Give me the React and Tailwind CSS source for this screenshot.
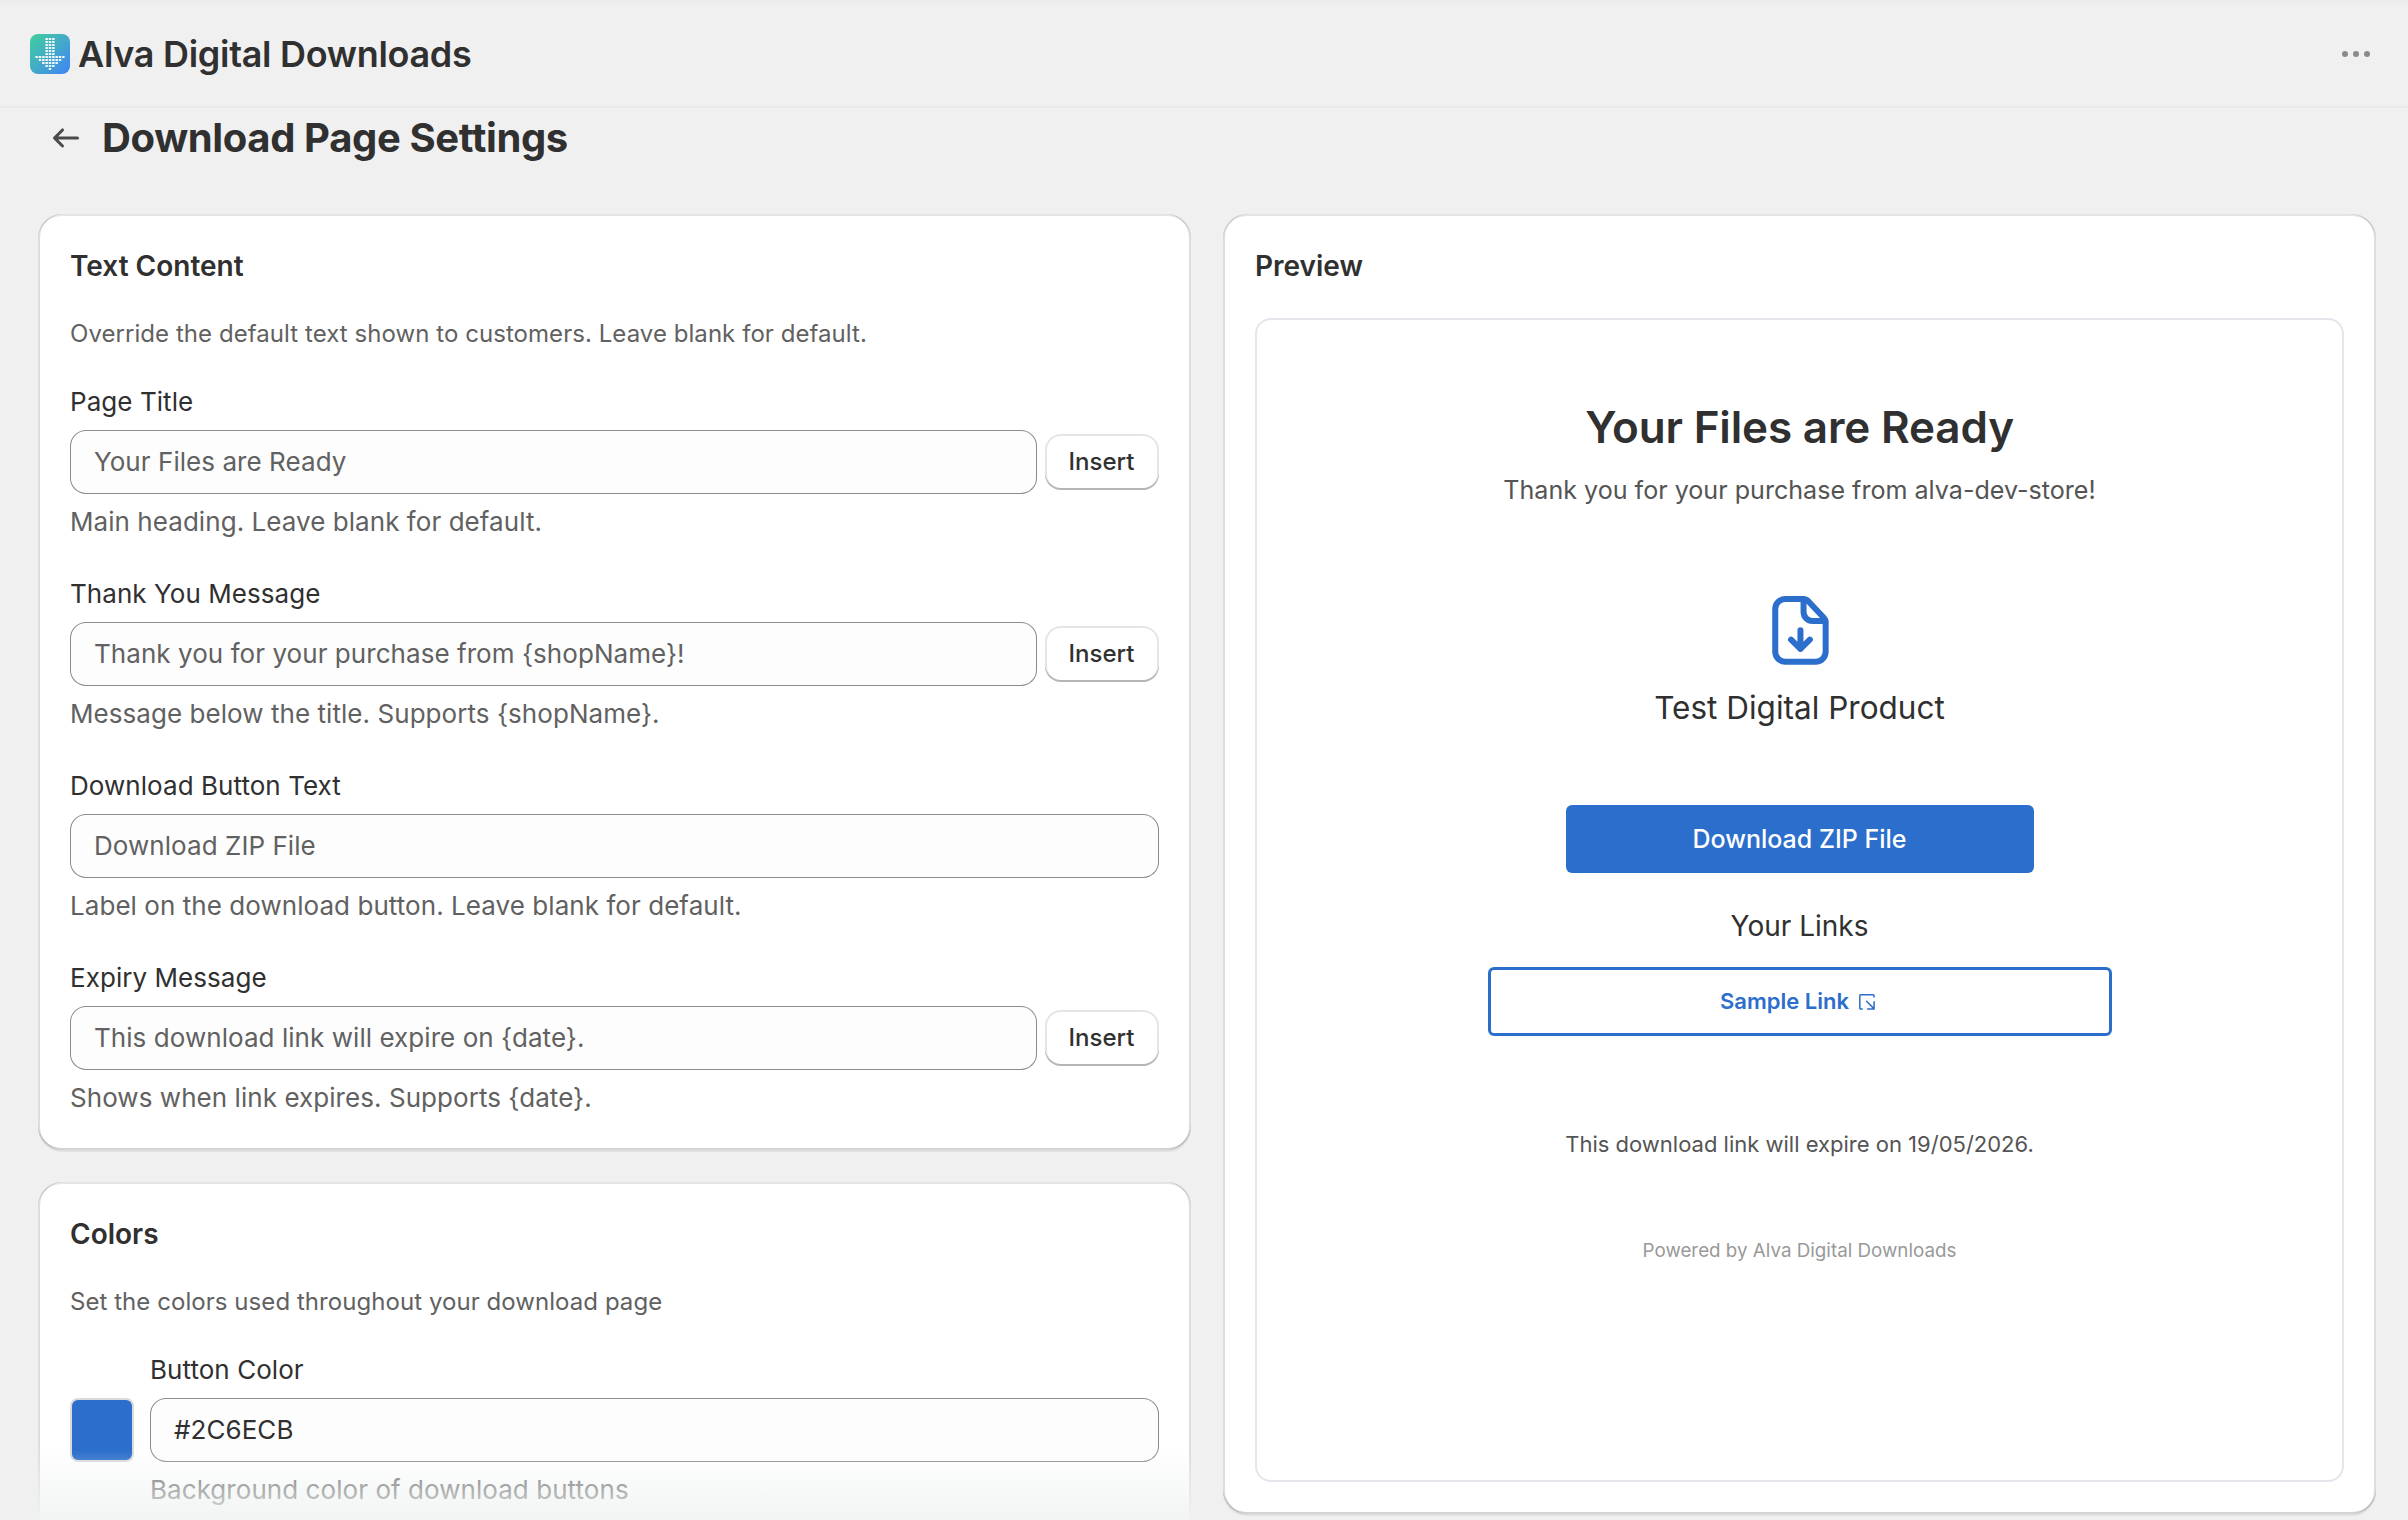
import { clsx } from "clsx";

const textFields = [
  {
    label: "Page Title",
    placeholder: "Your Files are Ready",
    help: "Main heading. Leave blank for default.",
    insertable: true,
  },
  {
    label: "Thank You Message",
    placeholder: "Thank you for your purchase from {shopName}!",
    help: "Message below the title. Supports {shopName}.",
    insertable: true,
  },
  {
    label: "Download Button Text",
    placeholder: "Download ZIP File",
    help: "Label on the download button. Leave blank for default.",
    insertable: false,
  },
  {
    label: "Expiry Message",
    placeholder: "This download link will expire on {date}.",
    help: "Shows when link expires. Supports {date}.",
    insertable: true,
  },
];

// dots per row of the logo's arrow, shaft first, then the head down to the tip
const LOGO_ROWS = [3, 3, 3, 3, 3, 3, 9, 7, 5, 3, 1];

function AppLogo() {
  return (
    <svg width="40" height="40" viewBox="0 0 40 40" className="shrink-0">
      <defs>
        <linearGradient id="logo-fill" x1="0" y1="0" x2="1" y2="1">
          <stop offset="0" stopColor="#3fcf9c" />
          <stop offset="0.5" stopColor="#43aac8" />
          <stop offset="1" stopColor="#3f83f8" />
        </linearGradient>
      </defs>
      <rect width="40" height="40" rx="8" fill="url(#logo-fill)" />
      {LOGO_ROWS.map((count, row) =>
        Array.from({ length: count }, (_, i) => (
          <rect
            key={`${row}-${i}`}
            x={20 + (i - (count - 1) / 2) * 3.33 - 1.25}
            y={5 + row * 3 - 1.1}
            width="2.5"
            height="2.2"
            rx="0.6"
            fill="#fff"
            fillOpacity="0.95"
          />
        ))
      )}
    </svg>
  );
}

function ArrowLeftIcon() {
  return (
    <svg width="40" height="40" viewBox="0 0 20 20" fill="#4a4a4a" className="shrink-0">
      <path d="M16.5 10a.75.75 0 0 1-.75.75h-9.69l2.72 2.72a.75.75 0 0 1-1.06 1.06l-4-4a.75.75 0 0 1 0-1.06l4-4a.75.75 0 1 1 1.06 1.06l-2.72 2.72h9.69a.75.75 0 0 1 .75.75Z" />
    </svg>
  );
}

function FileDownloadIcon({ className }) {
  return (
    <svg
      width="57"
      height="69"
      viewBox="0 0 56.5 69"
      fill="none"
      stroke="#2c6ecb"
      strokeWidth="6"
      strokeLinecap="round"
      strokeLinejoin="round"
      className={className}
    >
      <path d="M31.5 3H13A10 10 0 0 0 3 13v42.7a10 10 0 0 0 10 10h30.4a10 10 0 0 0 10-10V26c0-1.5-.5-2.9-1.6-4L35.6 4.7C34.5 3.6 33 3 31.5 3Z" />
      <path d="M31.3 3.5V16a9 9 0 0 0 9 9H53" />
      <path d="M28.2 34.3V53M18.8 43.6l9.4 9.2 9.4-9.2" />
    </svg>
  );
}

function ExternalIcon() {
  return (
    <svg width="16" height="16" viewBox="0 0 16 16" fill="none" stroke="#2c6ecb" strokeWidth="1.5" strokeLinecap="round" strokeLinejoin="round" className="mr-1">
      <path d="M15 3V1.5a.7.7 0 0 0-.7-.7H1.5a.7.7 0 0 0-.7.7v12.8a.7.7 0 0 0 .7.7H3.2" />
      <path d="M7.6 7.2l7.3 7.4M15.1 7.8v7.1H8.6" />
    </svg>
  );
}

function Card({ title, className, children }) {
  return (
    <section
      className={clsx(
        "rounded-3xl bg-white p-8 shadow-[0_2px_0_0_rgba(26,26,26,0.07),inset_2px_0_0_0_rgba(0,0,0,0.13),inset_-2px_0_0_0_rgba(0,0,0,0.13),inset_0_-2px_0_0_rgba(0,0,0,0.17),inset_0_2px_0_0_rgba(204,204,204,0.5)]",
        className
      )}
    >
      <h2 className="text-[28px] leading-10 font-semibold">{title}</h2>
      {children}
    </section>
  );
}

function TextField({ label, help, insertable, ...inputProps }) {
  return (
    <div className="min-w-0 flex-1 text-[26px] leading-10 tracking-[0.055px]">
      <label className="block">{label}</label>
      <div className="my-2 flex items-center gap-2">
        <input
          type="text"
          className="h-16 min-w-0 flex-1 rounded-2xl border border-[#8a8a8a] border-t-[#898f94] bg-[#fdfdfd] px-[23px] pb-0.5 text-[#303030] placeholder:text-[#616161] outline-none"
          {...inputProps}
        />
        {insertable ? (
          <button
            type="button"
            className="h-14 w-[114px] rounded-2xl bg-white pr-px text-2xl font-medium shadow-[inset_0_-2px_0_0_#b5b5b5,inset_0_0_0_2px_rgba(0,0,0,0.1)]"
          >
            Insert
          </button>
        ) : null}
      </div>
      <p className="text-[#616161]">{help}</p>
    </div>
  );
}

function DownloadPreview() {
  return (
    <div className="mt-8 flex h-[1164px] flex-col items-center rounded-2xl border-2 border-[#e5e5eb] pt-[79px] text-center">
      <h3 className="text-[44px] leading-14 font-semibold tracking-[-0.16px]">Your Files are Ready</h3>
      <p className="mt-[17px] text-[25.1px] leading-9 text-[#545454]">
        Thank you for your purchase from alva-dev-store!
      </p>
      <FileDownloadIcon className="mt-[88px] ml-px" />
      <p className="mt-[23px] text-[31.5px] leading-10">Test Digital Product</p>
      <button type="button" className="mt-[77px] h-[68px] w-[468px] rounded-md bg-[#2c6ecb] pt-0.5 text-[25px] font-medium text-white">
        Download ZIP File
      </button>
      <p className="mt-[33px] text-[28px] leading-10">Your Links</p>
      <a className="mt-[21px] flex h-[69px] w-[624px] items-center justify-center gap-2.5 rounded-md border-3 border-[#2c6ecb] text-[22px] font-semibold text-[#2c6ecb]">
        Sample Link
        <ExternalIcon />
      </a>
      <p className="mt-[92px] text-[22px] leading-8 text-[#545454]">This download link will expire on 19/05/2026.</p>
      <p className="mt-[77px] text-[18.8px] leading-7 text-[#999999]">Powered by Alva Digital Downloads</p>
    </div>
  );
}

export default function App() {
  return (
    <div className="h-[1520px] overflow-hidden bg-[#f0f0f0] font-['Inter',sans-serif] text-[#303030]">
      <header className="flex h-[108px] items-center justify-between border-b-2 border-[#eaeaea] bg-linear-to-b from-[#ebebeb] to-[#f0f0f0] to-[8px] pt-0.5 pr-[38px] pl-[30px]">
        <div className="flex items-center gap-2">
          <AppLogo />
          <span className="text-4xl font-semibold tracking-[-0.3px]">Alva Digital Downloads</span>
        </div>
        <div className="flex gap-[5px]">
          <span className="size-1.5 rounded-full bg-[#8a8a8a]" />
          <span className="size-1.5 rounded-full bg-[#8a8a8a]" />
          <span className="size-1.5 rounded-full bg-[#8a8a8a]" />
        </div>
      </header>

      <div className="flex h-[106px] items-start gap-4 pt-2.5 pl-[46px]">
        <ArrowLeftIcon />
        <h1 className="text-[40px] leading-10 font-bold tracking-[-0.37px]">Download Page Settings</h1>
      </div>

      <main className="grid grid-cols-2 gap-8 pr-8 pl-[38px]">
        <div className="relative h-[1306px] overflow-hidden">
          <Card title="Text Content">
            <p className="mt-8 text-2xl leading-8 tracking-[0.055px] text-[#616161]">
              Override the default text shown to customers. Leave blank for default.
            </p>
            <div className="mt-8 flex flex-col gap-8">
              {textFields.map((field) => (
                <TextField key={field.label} {...field} />
              ))}
            </div>
          </Card>

          <Card title="Colors" className="mt-8">
            <p className="mt-8 text-2xl leading-8 tracking-[0.055px] text-[#616161]">
              Set the colors used throughout your download page
            </p>
            <div className="mt-8 flex gap-4">
              <span className="mt-12 size-16 rounded-lg border-2 border-[#dadada] bg-[#2c6ecb]" />
              <TextField label="Button Color" defaultValue="#2C6ECB" help="Background color of download buttons" />
            </div>
          </Card>

          <div className="pointer-events-none absolute inset-x-0 bottom-0 h-[70px] bg-linear-to-b from-[#f1f3f3]/0 via-[#f1f3f3]/42 via-45% to-[#f1f3f3]/90" />
        </div>

        <Card title="Preview" className="h-[1300px]">
          <DownloadPreview />
        </Card>
      </main>
    </div>
  );
}
